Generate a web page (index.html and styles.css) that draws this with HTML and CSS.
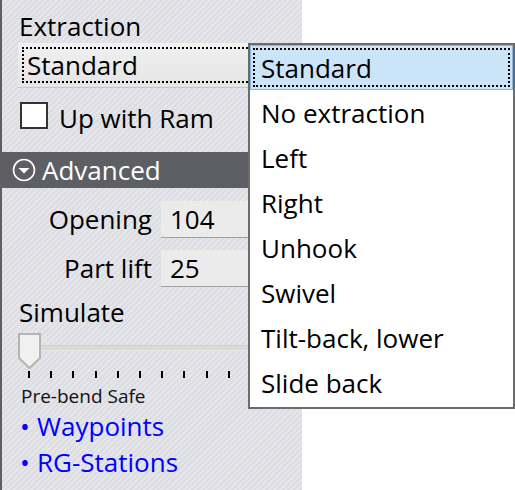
FILE: index.html
```html
<!DOCTYPE html>
<html>
<head>
<meta charset="utf-8">
<link rel="stylesheet" href="styles.css">
</head>
<body>
<div class="app">
  <aside class="panel">
    <div class="label label-top">Extraction</div>
    <div class="combo"><span class="combo-focus">Standard</span></div>
    <label class="check"><span class="check-box"></span><span class="check-text">Up with Ram</span></label>
    <div class="section-head">
      <svg class="section-icon" width="24" height="24" viewBox="0 0 24 24">
        <circle cx="12" cy="12" r="10.5" fill="none" stroke="#fff" stroke-width="1.6"/>
        <path d="M6.5 10 L17.5 10 L12 15.5 Z" fill="#fff"/>
      </svg>
      <span>Advanced</span>
    </div>
    <div class="fields">
      <span class="field-label">Opening</span><span class="field-input">104</span>
      <span class="field-label">Part lift</span><span class="field-input">25</span>
    </div>
    <div class="label label-sim">Simulate</div>
    <div class="slider">
      <svg class="slider-thumb" width="23" height="36" viewBox="0 0 23 36">
        <path d="M1 1 H22 V25 L11.5 35 L1 25 Z" fill="#f0f0f0" stroke="#b4b4b4" stroke-width="2"/>
      </svg>
      <div class="slider-track"></div>
    </div>
    <div class="ticks">
      <i></i><i></i><i></i><i></i><i></i><i></i><i></i><i></i><i></i><i></i>
    </div>
    <div class="small">Pre-bend Safe</div>
    <ul class="links">
      <li>Waypoints</li>
      <li>RG-Stations</li>
    </ul>
  </aside>
  <div class="popup">
    <div class="item selected"><span class="item-focus">Standard</span></div>
    <div class="item">No extraction</div>
    <div class="item">Left</div>
    <div class="item">Right</div>
    <div class="item">Unhook</div>
    <div class="item">Swivel</div>
    <div class="item">Tilt-back, lower</div>
    <div class="item">Slide back</div>
  </div>
</div>
</body>
</html>
```

FILE: styles.css
```css
* { box-sizing: border-box; }
html, body {
  margin: 0;
  padding: 0;
  background: #ffffff;
}
body {
  font-family: "Open Sans", "Noto Sans", sans-serif;
  font-size: 26px;
  color: #000;
  width: 515px;
  height: 490px;
  overflow: hidden;
}
.app {
  position: relative;
  width: 515px;
  height: 490px;
}
.panel {
  width: 302px;
  height: 490px;
  border-left: 2px solid #5f5f5f;
  padding: 11px 0 0 16px;
  display: flex;
  flex-direction: column;
  background: repeating-linear-gradient(135deg, #dcdce3 0 2px, #e5e5ea 2px 4px);
}
.label {
  line-height: 30px;
  padding-left: 1px;
}
.combo {
  margin-top: 2px;
  height: 45px;
  width: 290px;
  background: linear-gradient(#f0f0f0, #e5e5e5);
  border-bottom: 1px solid #c8c8c8;
  padding: 4px;
  display: flex;
}
.combo-focus {
  flex: 1;
  border: 2px dotted #000;
  border-right: none;
  line-height: 33px;
  padding-left: 3px;
}
.check {
  margin-top: 13px;
  display: flex;
  align-items: center;
  height: 28px;
  gap: 11px;
  padding-left: 2px;
}
.check-box {
  width: 28px;
  height: 27px;
  background: #fff;
  border: 2px solid #333;
}
.check-text {
  position: relative;
  top: 3px;
}
.section-head {
  margin: 23px 0 0 -16px;
  height: 36px;
  background: #5e5f64;
  color: #fff;
  display: flex;
  align-items: center;
  padding-left: 10px;
  gap: 6px;
}
.section-icon { display: block; }
.fields {
  margin-top: 13px;
  display: grid;
  grid-template-columns: 134px 1fr;
  column-gap: 9px;
  row-gap: 12px;
}
.field-label {
  text-align: right;
  line-height: 37px;
}
.field-input {
  height: 37px;
  line-height: 36px;
  background: #ebebeb;
  border-bottom: 1px solid #a0a0a0;
  padding-left: 9px;
}
.label-sim { margin-top: 10px; }
.slider {
  margin-top: 6px;
  display: flex;
  align-items: flex-start;
  height: 36px;
}
.slider-thumb { display: block; flex: none; }
.slider-track {
  flex: 1;
  margin-top: 12px;
  height: 6px;
  background: #dadada;
  border-top: 1px solid #d0d0d0;
  border-bottom: 1px solid #e6e6e6;
}
.ticks {
  margin-top: 2px;
  display: flex;
  gap: 20.2px;
  padding-left: 10px;
  height: 7px;
}
.ticks i {
  display: block;
  width: 2px;
  height: 7px;
  background: #000;
}
.small {
  font-size: 19px;
  margin-top: 6px;
  line-height: 24px;
  padding-left: 3px;
  color: #111;
}
.links {
  list-style: none;
  margin: 0;
  padding: 0;
  color: #0000ff;
}
.links li {
  line-height: 36px;
  padding-left: 2px;
}
.links li::before {
  content: "\2022";
  display: inline-block;
  width: 17px;
}
.popup {
  position: absolute;
  left: 248px;
  top: 43px;
  width: 267px;
  height: 366px;
  background: #fff;
  border: 2px solid #6b6b6b;
}
.item {
  height: 45px;
  line-height: 43px;
  padding: 2px 0 0 11px;
}
.item.selected {
  height: 45px;
  background: #cce4f7;
  border: 1px solid #84b6e8;
  padding: 2px;
  display: flex;
}
.item-focus {
  flex: 1;
  border: 2px dotted #000;
  line-height: 37px;
  padding-left: 6px;
}
```
